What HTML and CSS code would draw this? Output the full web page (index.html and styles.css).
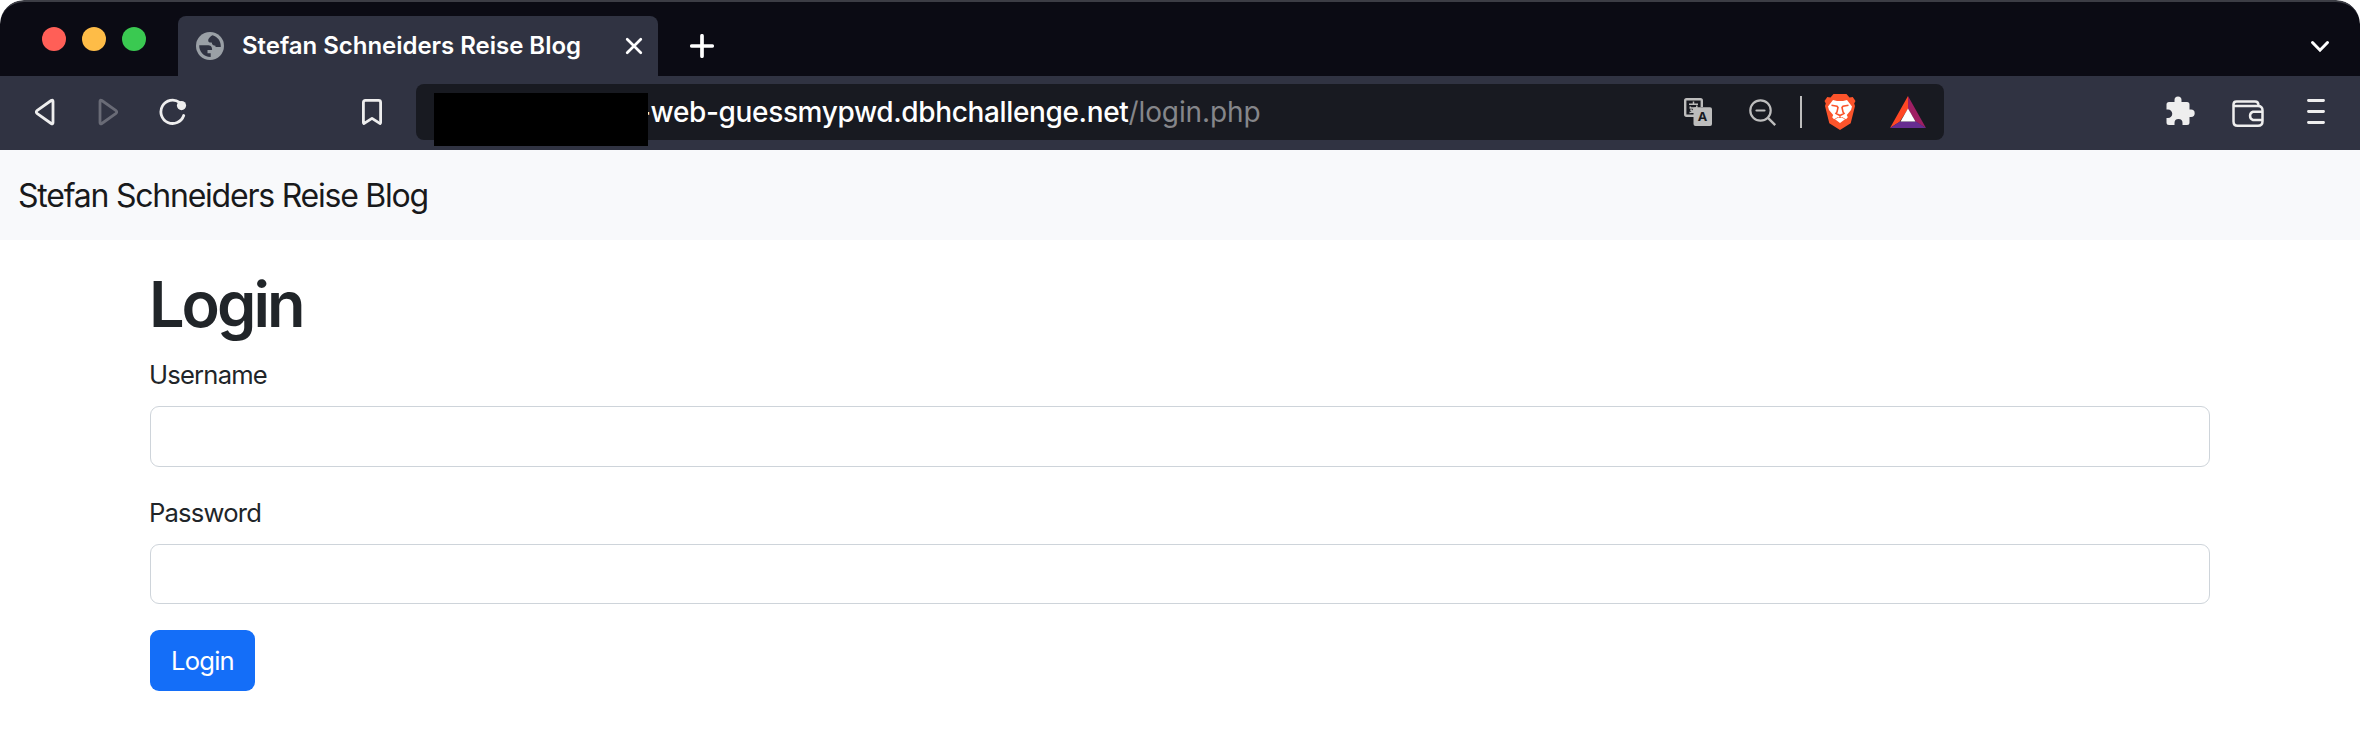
FILE: index.html
```html
<!DOCTYPE html>
<html lang="de">
<head>
<meta charset="utf-8">
<title>Stefan Schneiders Reise Blog</title>
<link rel="stylesheet" href="styles.css">
</head>
<body>
<div class="window">
  <header class="tabstrip">
    <div class="lights"><i class="light red"></i><i class="light yellow"></i><i class="light green"></i></div>
    <div class="tab">
      <svg class="globe" width="28" height="28" viewBox="0 0 28 28"><circle cx="14" cy="14" r="14" fill="#9aa0a6"/><path d="M3.2 13.3h8.1c3.4 0 4.800 1.400 4.800 4.600h-4.600v3.400h3.200v3.600C8 25 3 20 3.200 13.300zM16.500 3.300c-1.200.5-4.300 2.800-4.300 5.200 0 1.800 1 2.100 3.500 2.100.4 2.500 1.600 3 3.800 3.200v1.100h5.300c.2-5.500-2.800-10-8.300-11.600z" fill="#303342"/></svg>
      <span class="tab-title">Stefan Schneiders Reise Blog</span>
      <svg class="close" width="18" height="18" viewBox="0 0 18 18"><path d="M2.200 2.200l13.600 13.600M15.800 2.200L2.200 15.800" stroke="#fff" stroke-width="2.700" stroke-linecap="round"/></svg>
    </div>
    <svg class="plus" width="24" height="24" viewBox="0 0 24 24"><path d="M12 1.800v20.400M1.800 12h20.400" stroke="#fff" stroke-width="3.700" stroke-linecap="round"/></svg>
    <svg class="chevron" width="20" height="14" viewBox="0 0 20 14"><path d="M2.500 2.500L10 10.200l7.500-7.700" fill="none" stroke="#fff" stroke-width="3" stroke-linecap="round"/></svg>
  </header>
  <div class="toolbar">
    <svg class="back" width="20" height="28" viewBox="0 0 20 28"><path d="M16.200 2.500Q18 1.300 18 3.500v21q0 2.200-1.800 1L2.300 15.600q-2-1.600 0-3.200z" fill="none" stroke="#eee" stroke-width="2.800" stroke-linejoin="round"/></svg>
    <svg class="forward" width="20" height="28" viewBox="0 0 20 28"><path d="M3.800 2.500Q2 1.300 2 3.500v21q0 2.200 1.800 1l13.900-9.900q2-1.600 0-3.200z" fill="none" stroke="#696b76" stroke-width="2.800" stroke-linejoin="round"/></svg>
    <svg class="reload" width="28" height="28" viewBox="0 0 28 28"><path d="M20.500 4.300A11.700 11.700 0 1 0 24.700 17.500" fill="none" stroke="#eee" stroke-width="2.800" stroke-linecap="round"/><circle cx="22.500" cy="7.600" r="4.600" fill="#eee"/></svg>
    <svg class="bookmark" width="20" height="26" viewBox="0 0 20 26"><path d="M1.400 3.400q0-2 2-2h13.200q2 0 2 2v20.200q0 1.500-1.200.6L10 19.300l-7.400 4.900q-1.200.9-1.200-.6z" fill="none" stroke="#eee" stroke-width="2.800" stroke-linejoin="round"/></svg>
    <div class="address">
      <div class="redacted"></div>
      <div class="url"><span class="host">-web-guessmypwd.dbhchallenge.net</span><span class="path">/login.php</span></div>
      <svg class="translate" width="28" height="28" viewBox="0 0 28 28"><path d="M10 17.700H2.500q-1.300 0-1.300-1.500V2.700q0-1.500 1.300-1.500h14q1.300 0 1.300 1.500V9" fill="none" stroke="#bdbdbd" stroke-width="2.400"/><path d="M9.500 3.500v2M5 6.300h9M6.300 8.500v1.500h6.500V7.500M9.500 10v2.500M5.500 14.500c3 0 5.500-1.500 7-4M6.500 11.500c1 1.700 3 2.700 5.500 2.700" fill="none" stroke="#bdbdbd" stroke-width="1.500"/><rect x="9.500" y="9.300" width="18.500" height="18.700" rx="2" fill="#bdbdbd"/><text x="18.600" y="23" text-anchor="middle" class="translate-letter">A</text></svg>
      <svg class="zoomout" width="28" height="28" viewBox="0 0 28 28"><g fill="none" stroke="#bdbdbd" stroke-width="2.200"><circle cx="11.500" cy="11.500" r="10.200"/><path d="M7.500 11.500h8" stroke-linecap="round"/><path d="M18.700 18.700l7.500 7.500" stroke-width="2.400"/></g></svg>
      <i class="divider"></i>
      <svg class="brave" width="32" height="36" viewBox="0 0 32 36"><path d="M9.500 0h13l3 3.500 3.200-.4L31.500 7l-1.300 2.500L31 12l-4.300 17.300L16 36 5.300 29.300 1 12l.8-2.500L.5 7l2.800-3.900 3.200.4z" fill="#fb542b"/><path d="M9 6l4 1h6l4-1 5 6.500-1 3.500-4.200 5 1 2.200-1.800 2-4-2.200h-4l-4 2.200-1.800-2 1-2.200L5 16l-1-3.500zM16 22.800l5 2.500-5 3.800-5-3.800z" fill="#fff"/><path d="M7.500 11.200l5.500 1 1 1.300-1 4.500-1 1.500 4 2 4-2-1-1.500-1-4.500 1-1.300 5.500-1M16 21.500v2.500" fill="none" stroke="#fb542b" stroke-width="1.600"/></svg>
      <svg class="bat" width="36" height="32" viewBox="0 0 36 32"><path d="M18 0v13L9.500 26 0 32z" fill="#ff4724"/><path d="M18 0l18 32-10-6-8-13z" fill="#9e1f63"/><path d="M0 32l10-6.500h16L36 32z" fill="#662d91"/><path d="M18 12.500L25.500 25.500h-15z" fill="#fff"/></svg>
    </div>
    <svg class="puzzle" width="30" height="30" viewBox="0 0 30 30"><path d="M3 6h5.500V4a3.500 3.500 0 0 1 7 0v2H21q2.500 0 2.500 2.500v5H25a3.700 3.700 0 0 1 0 7.400h-1.500v5.600q0 2.500-2.500 2.500h-4.500v-2a4 4 0 0 0-8 0v2H3Q.5 29 .5 26.500V22H2a4 4 0 0 0 0-8.500H.500v-5Q.5 6 3 6z" fill="#eee"/></svg>
    <svg class="wallet" width="32" height="28" viewBox="0 0 32 28"><g fill="none" stroke="#eee" stroke-width="2.500"><path d="M26.500 5.500Q26.500 1.400 23 1.400H4.500q-3 0-3 3v17q0 4.300 4 4.300h20.500q4.500 0 4.500-4.500V10.200q0-4.200-4.500-4.200H1.500"/><path d="M30.500 11.700H21a4 4.300 0 0 0 0 8.300h9.500"/></g></svg>
    <svg class="menu" width="18" height="26" viewBox="0 0 18 26"><path d="M1.500 1.500h15M1.500 12.500h15M1.500 23.500h15" stroke="#eee" stroke-width="2.900" stroke-linecap="round"/></svg>
  </div>
  <nav class="navbar"><a class="brand">Stefan Schneiders Reise Blog</a></nav>
  <main class="container">
    <h1 class="heading">Login</h1>
    <form class="form">
      <label class="label user-label" for="user">Username</label>
      <input class="field" id="user" type="text">
      <label class="label pass-label" for="pass">Password</label>
      <input class="field short" id="pass" type="password">
      <button class="submit" type="button">Login</button>
    </form>
  </main>
</div>
</body>
</html>
```
FILE: styles.css
```css
* { box-sizing: border-box; }
body { margin: 0; background: #fff; font-family: Inter, "Liberation Sans", sans-serif; color: #212529; }
svg { display: block; flex: none; }
.window { height: 750px; border-radius: 24px 24px 0 0; overflow: hidden; background: #fff; }
.tabstrip { height: 76px; display: flex; align-items: flex-start; background: #0b0b14; border-top: 2px solid #3c3d45; border-radius: 24px 24px 0 0; }
.lights { display: flex; gap: 16px; width: 178px; padding: 25px 0 0 42px; flex: none; }
.light { width: 24px; height: 24px; border-radius: 50%; }
.red { background: #ff5f57; }
.yellow { background: #febc47; }
.green { background: #3ac951; }
.tab { width: 480px; height: 60px; margin-top: 14px; padding: 0 15px 0 18px; display: flex; align-items: center; background: #303342; border-radius: 8px 8px 0 0; flex: none; }
.tab-title { margin-left: 18px; font-size: 24px; font-weight: 600; line-height: 30px; letter-spacing: -0.03px; color: #fff; white-space: nowrap; }
.close { margin-left: auto; }
.plus { margin: 32px 0 0 32px; }
.chevron { margin: 38px 30px 0 auto; }
.toolbar { height: 74px; display: flex; align-items: flex-start; background: #303342; }
.back { margin: 22px 0 0 35px; }
.forward { margin: 22px 0 0 43px; }
.reload { margin: 22px 0 0 41px; }
.bookmark { margin: 23px 0 0 175px; }
.address { width: 1528px; height: 56px; margin: 8px 0 0 34px; display: flex; background: #181a21; border-radius: 8px; flex: none; }
.redacted { width: 214px; height: 53px; margin: 9px 0 0 18px; background: #000; z-index: 1; flex: none; }
.url { margin-left: -10px; font-size: 28px; line-height: 56px; white-space: nowrap; color: #fff; width: 1046px; flex: none; }
.host { font-weight: 500; letter-spacing: -0.36px; }
.path { color: #85868a; letter-spacing: -0.1px; }
.translate { margin-top: 14px; }
.translate-letter { font: 700 13px "Noto Sans", sans-serif; fill: #181a21; }
.zoomout { margin: 15px 0 0 37px; }
.divider { width: 2px; height: 32px; margin: 12px 0 0 23px; background: #bdbdbd; }
.brave { margin: 10px 0 0 22px; }
.bat { margin: 12px 0 0 34px; }
.puzzle { margin: 20px 0 0 222px; }
.wallet { margin: 24px 0 0 36px; }
.menu { margin: 23px 0 0 43px; }
.navbar { height: 90px; padding-left: 18px; background: #f8f9fb; }
.brand { font-size: 32px; line-height: 92px; letter-spacing: -1.23px; color: #18191b; }
.container { padding: 0 150px; }
.heading { margin: 0 0 0 -1px; padding-top: 26px; font-size: 63px; font-weight: 600; line-height: 77px; letter-spacing: -3px; }
.form { display: flex; flex-direction: column; align-items: flex-start; }
.label { margin-left: -1px; font-size: 25.6px; line-height: 38px; letter-spacing: -0.8px; }
.user-label { margin-top: 13px; }
.pass-label { margin-top: 27px; }
.field { width: 100%; height: 61px; margin: 12px 0 0; border: 1px solid #ced4da; border-radius: 9px; background: #fff; }
.short { height: 60px; }
.submit { width: 105px; height: 61px; margin-top: 26px; padding: 0; border: 0; border-radius: 9px; background: #146ef8; color: #fff; font-family: inherit; font-size: 25.6px; letter-spacing: -0.8px; }
```
